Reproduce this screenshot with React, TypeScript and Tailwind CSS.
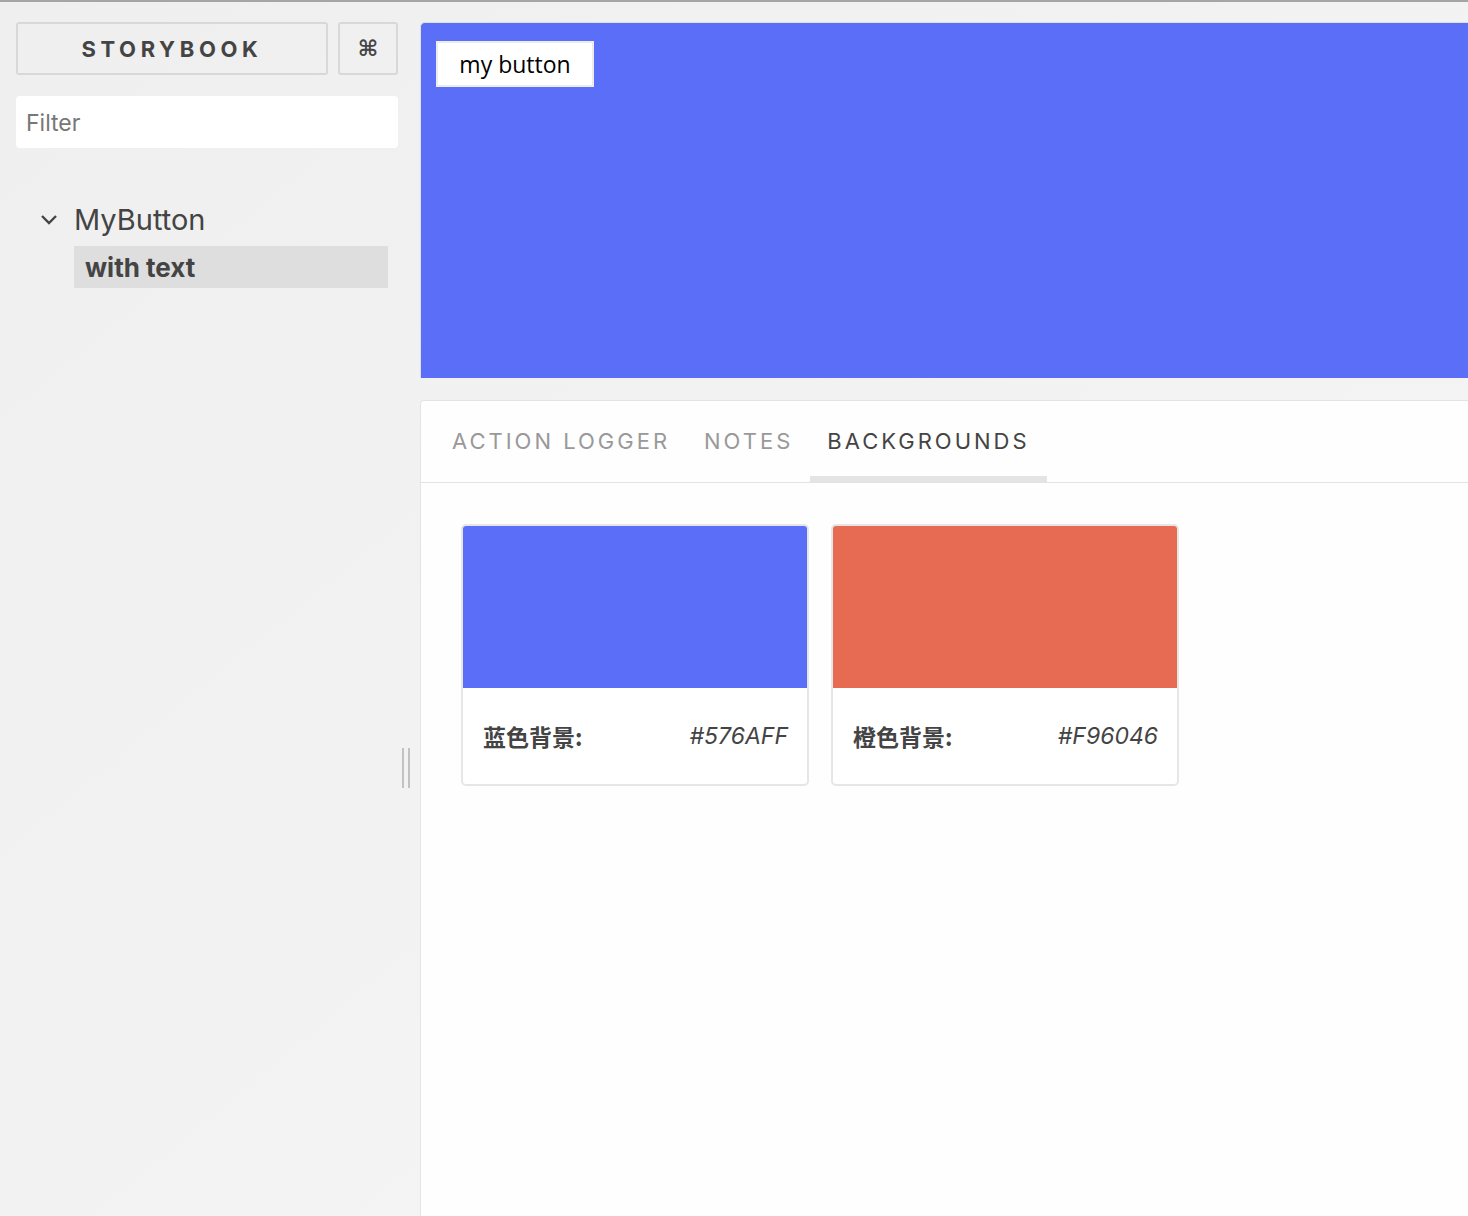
import React from "react";

const sans = { fontFamily: "Inter, 'Noto Sans CJK SC', sans-serif" };

export default function App() {
  return (
    <div
      className="w-[1468px] h-[1216px] overflow-hidden flex bg-gradient-to-br from-[#efefef] to-[#f6f6f6] border-t-2 border-[#a5a5a5] text-[#444]"
      style={sans}
    >
      {/* Sidebar */}
      <div className="w-[400px] shrink-0 pl-4 pr-[2px] pt-5 flex flex-col">
        <div className="flex gap-[10px]">
          <div className="w-[312px] h-[53px] border-2 border-[#d8d8d8] rounded-[3px] flex items-center justify-center text-[22px] font-bold tracking-[4.6px] text-[#444] pt-[2px]">
            STORYBOOK
          </div>
          <div className="w-[60px] h-[53px] border-2 border-[#d8d8d8] rounded-[3px] flex items-center justify-center text-[22px] font-bold text-[#444]" style={{ fontFamily: "'DejaVu Sans', sans-serif" }}>
            ⌘
          </div>
        </div>
        <div className="mt-[21px] h-[52px] bg-white rounded-[4px] flex items-center pl-[10px] pt-[2px] text-[23px] text-[#777]">
          Filter
        </div>
        <div className="mt-[52px] flex items-center h-[40px]">
          <svg width="18" height="12" viewBox="0 0 18 12" className="ml-[24px] mr-[16px]">
            <path d="M2 2 L9 9 L16 2" fill="none" stroke="#444" strokeWidth="2.4" />
          </svg>
          <span className="text-[29px] text-[#444]">MyButton</span>
        </div>
        <div className="ml-[58px] mr-[10px] mt-[6px] h-[42px] bg-[#dedede] flex items-center pl-[11px] text-[26px] font-bold text-[#444]">
          with text
        </div>
      </div>

      {/* Resize handle column */}
      <div className="w-[20px] shrink-0 flex justify-center gap-[4px] pt-[746px] pr-[8px]">
        <div className="w-[2px] h-[40px] bg-[#c2c2c2]" />
        <div className="w-[2px] h-[40px] bg-[#c2c2c2]" />
      </div>

      {/* Main */}
      <div className="flex-1 flex flex-col pt-[20px]">
        <div className="h-[356px] bg-[#5a6ef7] rounded-tl-[5px] border-t border-l border-[#e0e0e0] pt-[18px] pl-[15px]">
          <div
            className="w-[158px] h-[46px] bg-white border-2 border-[#ececec] flex items-center justify-center text-[23px] text-black"
            style={{ fontFamily: "'Open Sans', sans-serif" }}
          >
            my button
          </div>
        </div>
        <div className="mt-[22px] flex-1 bg-[#fefefe] border-t border-l border-[#e4e4e4] rounded-tl-[4px] flex flex-col">
          <div className="h-[82px] border-b border-[#e3e3e3] flex pl-[14px]">
            <div className="px-[17px] flex items-center text-[22px] tracking-[3px] text-[#999] border-b-[6px] border-transparent pt-[6px]">
              ACTION LOGGER
            </div>
            <div className="px-[17px] flex items-center text-[22px] tracking-[3px] text-[#999] border-b-[6px] border-transparent pt-[6px]">
              NOTES
            </div>
            <div className="px-[17px] flex items-center text-[22px] tracking-[3px] text-[#444] border-b-[6px] border-[#e4e4e4] pt-[6px]">
              BACKGROUNDS
            </div>
          </div>
          <div className="pt-[41px] pl-[40px] flex gap-[22px]">
            <Swatch color="#5a6ef7" name="蓝色背景:" hex="#576AFF" />
            <Swatch color="#e76a52" name="橙色背景:" hex="#F96046" />
          </div>
        </div>
      </div>
    </div>
  );
}

function Swatch({ color, name, hex }: { color: string; name: string; hex: string }) {
  return (
    <div className="w-[348px] h-[262px] border-2 border-[#e6e6e6] rounded-[5px] overflow-hidden flex flex-col bg-white">
      <div className="h-[162px]" style={{ backgroundColor: color }} />
      <div className="flex-1 flex items-center justify-between pl-[20px] pr-[19px]">
        <span className="text-[23px] font-bold text-[#444]" style={{ fontFamily: "'Noto Sans CJK SC', sans-serif" }}>{name}</span>
        <span className="text-[23px] italic text-[#444]" style={{ fontFamily: "Inter, sans-serif" }}>{hex}</span>
      </div>
    </div>
  );
}
